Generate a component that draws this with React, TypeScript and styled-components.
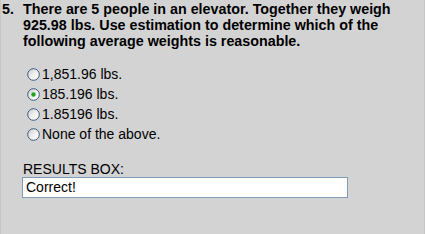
import React from "react";
import styled, { createGlobalStyle } from "styled-components";

const Global = createGlobalStyle`
  html, body { margin: 0; padding: 0; background: #d3d3d3; }
  body { font-family: "Liberation Sans", Arial, sans-serif; color: #000; }
`;

const Page = styled.div`
  width: 425px;
  height: 234px;
  box-sizing: border-box;
  background: #d3d3d3;
  border-left: 1px solid #c6c6c6;
  border-right: 1px solid #c6c6c6;
  padding: 1px 0 0 1px;
`;

const Question = styled.div`
  display: flex;
  font-weight: bold;
  font-size: 14.3px;
  line-height: 16px;
`;

const Num = styled.span`
  flex: 0 0 21px;
`;

const QText = styled.span`
  flex: 1;
`;

const Options = styled.div`
  display: flex;
  flex-direction: column;
  margin: 17px 0 0 25px;
  gap: 4px;
`;

const Row = styled.label`
  display: flex;
  align-items: center;
  gap: 2px;
  font-size: 14px;
  line-height: 16px;
  height: 16px;
`;

const Label = styled.div`
  margin: 19px 0 0 21px;
  font-size: 14px;
  line-height: 16px;
`;

const Box = styled.div`
  margin: 0 0 0 20px;
  width: 326px;
  height: 21px;
  box-sizing: border-box;
  border: 1px solid #7f9db9;
  background: #fff;
  font-size: 14px;
  line-height: 19px;
  padding-left: 3px;
`;

const Radio: React.FC<{ checked?: boolean }> = ({ checked }) => (
  <svg width="13" height="13" viewBox="0 0 13 13">
    <defs>
      <linearGradient id={checked ? "rgc" : "rgu"} x1="0" y1="0" x2="1" y2="1">
        <stop offset="0" stopColor="#c8c8c8" />
        <stop offset="0.5" stopColor="#f0f0f0" />
        <stop offset="1" stopColor="#ffffff" />
      </linearGradient>
    </defs>
    <circle cx="6.5" cy="6.5" r="5.8" fill={`url(#${checked ? "rgc" : "rgu"})`} stroke="#3c5a80" strokeWidth="1" />
    {checked && <circle cx="6.5" cy="6.5" r="2.2" fill="#21a121" />}
  </svg>
);

const options = ["1,851.96 lbs.", "185.196 lbs.", "1.85196 lbs.", "None of the above."];

export default function App() {
  return (
    <>
      <Global />
      <Page>
        <Question>
          <Num>5.</Num>
          <QText>
            There are 5 people in an elevator. Together they weigh 925.98 lbs. Use estimation to determine which of the
            following average weights is reasonable.
          </QText>
        </Question>
        <Options>
          {options.map((o, i) => (
            <Row key={o}>
              <Radio checked={i === 1} />
              {o}
            </Row>
          ))}
        </Options>
        <Label>RESULTS BOX:</Label>
        <Box>Correct!</Box>
      </Page>
    </>
  );
}
